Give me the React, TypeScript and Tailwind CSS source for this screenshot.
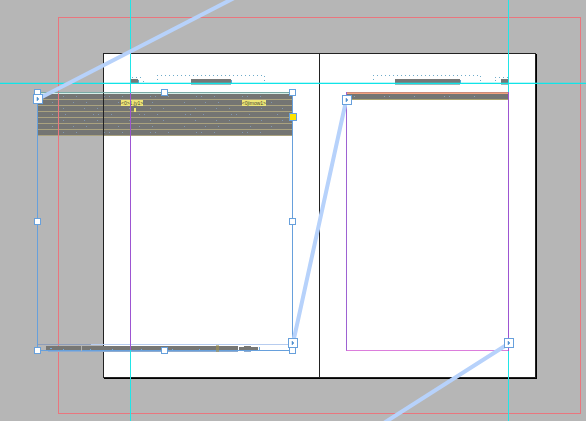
import clsx from 'clsx'
import React from 'react'

const textLines = [0, 1, 2, 3, 4, 5, 6]

const handles = [
  { label: 'Resize top left', place: 'left-[34px] top-[89px]' },
  { label: 'Resize top', place: 'left-[161px] top-[89px]' },
  { label: 'Resize top right', place: 'left-[289px] top-[89px]' },
  { label: 'Resize left', place: 'left-[34px] top-[218px]' },
  { label: 'Resize right', place: 'left-[289px] top-[218px]' },
  { label: 'Resize bottom left', place: 'left-[34px] top-[347px]' },
  { label: 'Resize bottom', place: 'left-[161px] top-[347px]' },
  { label: 'Resize bottom right', place: 'left-[289px] top-[347px]' },
]

const ports = [
  { label: 'Left frame in port', place: 'left-[33px] top-[94px]' },
  { label: 'Left frame out port', place: 'left-[288px] top-[338px]' },
  { label: 'Right frame in port', place: 'left-[342px] top-[95px]' },
  { label: 'Right frame out port', place: 'left-[504px] top-[338px]' },
]

function Spread() {
  return (
    <div className="flex flex-1 border border-[#222] bg-white shadow-[1px_1px_0_#000]">
      <section aria-label="Left page" className="flex-1 border-r border-[#222]" />
      <section aria-label="Right page" className="flex flex-1">
        <div className="mx-[26px] mb-[26px] mt-[38px] flex-1 border-x border-b border-x-[#9d62d2] border-b-[#dc7edc]">
          <div className="border-b border-t border-b-[#aaa371] border-t-[#cb8c7b] bg-[#747573]">
            <div className="h-px bg-[#f2a27f]" />
            <svg className="block h-[5px] w-full" shapeRendering="crispEdges" aria-hidden="true">
              <path d="M7 2.500H155" stroke="#8ca2b5" strokeDasharray="1 29 1 4 1 24" />
            </svg>
          </div>
        </div>
      </section>
    </div>
  )
}

// Running heads and folios, shown as grey bars at this zoom
function RunningHeads() {
  return (
    <svg className="absolute left-0 top-0" width="586" height="100" fill="none" shapeRendering="crispEdges" aria-hidden="true">
      <path d="M130 79h8v4h-8zM191 79h40v4h-40zM395 79h65v4h-65zM501 79h7v4h-7z" fill="#777978" />
      <path d="M191 84.500h40M395 84.500h65M501 84.500h7" stroke="#9db8b8" />
      <path d="M138.500 80v3M231.500 80v3M460.500 80v3" stroke="#5ba3d0" />
      <g stroke="#6fabc9" strokeDasharray="1 3">
        <path d="M157 75.500H265M373 75.500H480" />
        <path d="M132 77.500H144M495 77.500H508" />
        <path d="M157.500 79v4M264.500 76v6M143.500 81v2M373.500 79v4M480.500 76v6M495.500 80v3" />
      </g>
    </svg>
  )
}

// The selected frame hangs over the pasteboard, so the slug and page edges show through it
function LeftStory() {
  return (
    <div className="absolute left-[37px] top-[92px] h-[259px] w-[256px] border border-[#67a0dc] border-t-[#79aaa5]">
      <div className="h-px bg-[#d5eee8]" />
      {textLines.map((line) => (
        <div key={line} className="border-b border-[#aaa27f] bg-[#747573]">
          <svg className="block h-[5px] w-full" aria-hidden="true">
            <path
              d={line % 2 ? 'M14 2.500H240' : 'M25 2.500H250'}
              stroke="#8298af"
              strokeDasharray={line % 3 ? '1 20 1 12 1 31' : '1 12 1 27 1 4'}
              shapeRendering="crispEdges"
            />
          </svg>
        </div>
      ))}
      <div className="absolute inset-y-0 left-[20px] w-px bg-[#e9767e]" />
      <div className="absolute inset-y-0 left-[65px] w-px bg-[#222]" />
      <div className="absolute inset-x-[83px] top-[7px] flex justify-between whitespace-nowrap text-[5px] leading-[6px] text-[#44442f] -mr-[57px]">
        <span className="bg-[#eee678]">&lt;0&gt;1.jy1&gt;</span>
        <span className="bg-[#eee678]">&lt;0jimow1&gt;</span>
      </div>
      <div className="absolute left-[96px] top-[15px] h-[4px] w-[2px] bg-[#f2ea70]" />
    </div>
  )
}

function Footnote() {
  return (
    <svg className="absolute left-0 top-[340px]" width="300" height="15" shapeRendering="crispEdges" aria-hidden="true">
      <path d="M38 4h53v1H38z" fill="#8e9db9" />
      <path d="M91 4h198v1H91z" fill="#b7ccef" />
      <path d="M46 6h192v4H46zM239 7h19v3h-19zM244 6h7v1h-7z" fill="#777774" />
      <path d="M48 11h190v1H48zM244 11h7v1h-7z" fill="#8eabd0" />
      <path d="M50 8h2v1h-2zM63 9h1v1h-1zM90 9h1v1h-1zM112 9h1v1h-1zM141 9h1v1h-1zM172 9h1v1h-1zM199 9h1v1h-1zM259 7h1v3h-1z" fill="#6faae0" />
      <path d="M81 6h1v5h-1z" fill="#b3b3b0" />
      <path d="M216 5h3v7h-3z" fill="#a49450" fillOpacity="0.6" />
    </svg>
  )
}

function Guides() {
  return (
    <>
      <div className="absolute inset-y-0 left-[130px] w-px bg-[#20e5e8]" />
      <div className="absolute inset-y-0 left-[508px] w-px bg-[#20e5e8]" />
      <div className="absolute inset-x-0 top-[82px] h-[2px] border-b border-[#10e4e8] bg-[#20e5e8]/30" />
      <div className="absolute left-[130px] top-[93px] h-[257px] w-px bg-[#9d55d2]" />
      <div className="absolute left-[508px] top-[92px] h-[259px] w-px bg-[#9d55d2]" />
    </>
  )
}

function TextThreads() {
  return (
    <svg className="absolute left-0 top-0" width="586" height="421" fill="none" stroke="#b7d2fb" strokeWidth="4" aria-hidden="true">
      <path d="M38 99L240 -5M346 101L293 343M508 344L376 428" />
    </svg>
  )
}

function Handle({ label, place, filled }: { label: string; place: string; filled?: boolean }) {
  return (
    <button
      type="button"
      aria-label={label}
      className={clsx('absolute size-[7px] border border-[#67a0dc]', filled ? 'bg-[#ffe300]' : 'bg-white', place)}
    />
  )
}

function Port({ label, place }: { label: string; place: string }) {
  return (
    <button type="button" aria-label={label} className={clsx('absolute size-[10px] border border-[#67a0dc] bg-white', place)}>
      <svg className="block" width="8" height="8" aria-hidden="true">
        <path d="M3 2L5 4L3 6z" fill="#4e8fce" stroke="#4e8fce" strokeWidth="0.5" />
      </svg>
    </button>
  )
}

export default function App() {
  return (
    <main className="relative flex min-h-screen overflow-hidden bg-[#b6b6b6] pb-[7px] pl-[58px] pr-[5px] pt-[17px] font-['Liberation_Sans',sans-serif]">
      {/* Slug area around the spread */}
      <div className="flex flex-1 border border-[#e9767e] px-[44px] py-[35px]">
        <Spread />
      </div>

      <RunningHeads />
      <LeftStory />
      <Footnote />
      <Guides />
      <TextThreads />

      {handles.map((handle) => (
        <Handle key={handle.label} {...handle} />
      ))}
      <Handle label="Anchor object" place="left-[289px] top-[113px] size-[8px]" filled />
      {ports.map((port) => (
        <Port key={port.label} {...port} />
      ))}
    </main>
  )
}
